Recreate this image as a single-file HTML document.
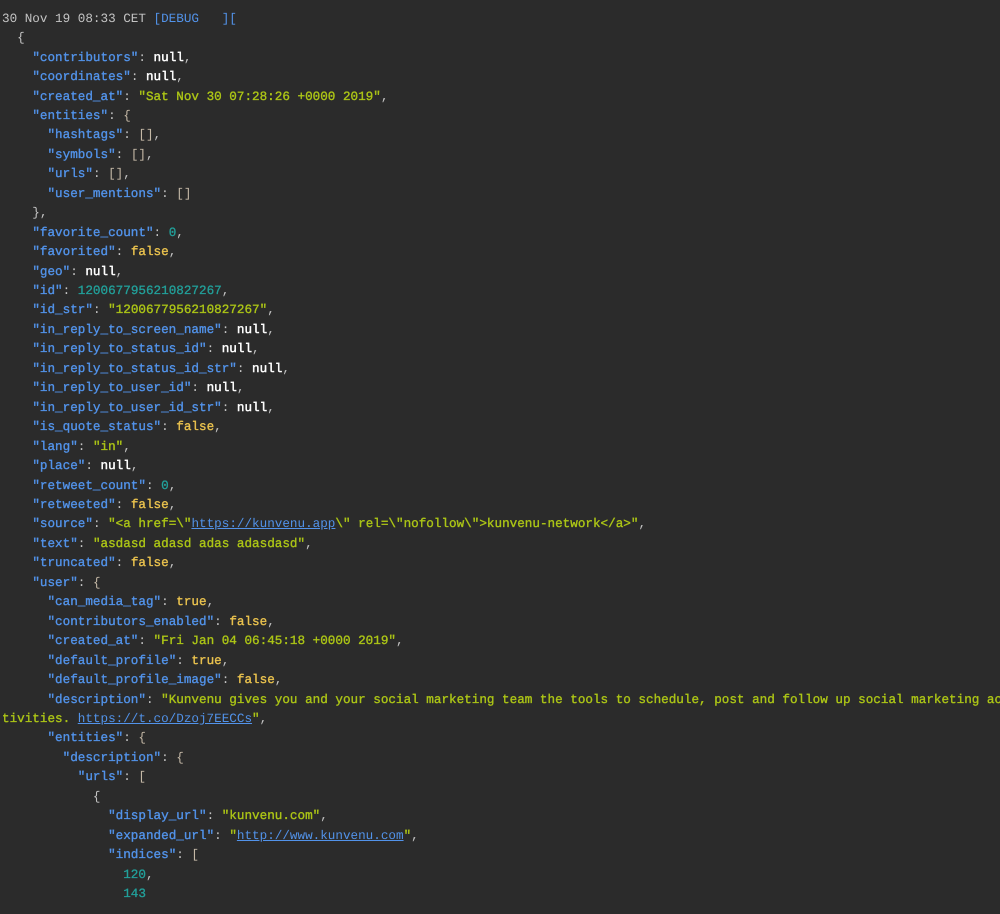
<!DOCTYPE html>
<html>
<head>
<meta charset="utf-8">
<style>
html,body{margin:0;padding:0;background:#2b2b2b;width:1000px;height:914px;overflow:hidden}
pre{margin:0;padding:8.7px 0 0 2px;font-family:"Liberation Mono",monospace;font-size:12.63px;line-height:19.46px;color:#c4c4c4;white-space:pre;font-weight:400;text-rendering:geometricPrecision;filter:blur(.25px)}
.k{color:#5293ea;-webkit-text-stroke:.35px #5293ea}
.s{color:#acc516;-webkit-text-stroke:.35px #acc516}
.n{color:#fff;-webkit-text-stroke:.45px #fff}
.b{color:#eac24e;-webkit-text-stroke:.35px #eac24e}
.d{color:#22a09a;-webkit-text-stroke:.3px #22a09a}
.t{color:#5293ea}
a{color:#5293ea;text-decoration:underline}
.p{color:#c4b8a6}
</style>
</head>
<body>
<pre>30 Nov 19 08:33 CET <span class="t">[DEBUG   ]</span><span class="t">[</span>
  {
    <span class="k">"contributors"</span>: <span class="n">null</span>,
    <span class="k">"coordinates"</span>: <span class="n">null</span>,
    <span class="k">"created_at"</span>: <span class="s">"Sat Nov 30 07:28:26 +0000 2019"</span>,
    <span class="k">"entities"</span>: <span class="p">{</span>
      <span class="k">"hashtags"</span>: <span class="p">[]</span>,
      <span class="k">"symbols"</span>: <span class="p">[]</span>,
      <span class="k">"urls"</span>: <span class="p">[]</span>,
      <span class="k">"user_mentions"</span>: <span class="p">[]</span>
    },
    <span class="k">"favorite_count"</span>: <span class="d">0</span>,
    <span class="k">"favorited"</span>: <span class="b">false</span>,
    <span class="k">"geo"</span>: <span class="n">null</span>,
    <span class="k">"id"</span>: <span class="d">1200677956210827267</span>,
    <span class="k">"id_str"</span>: <span class="s">"1200677956210827267"</span>,
    <span class="k">"in_reply_to_screen_name"</span>: <span class="n">null</span>,
    <span class="k">"in_reply_to_status_id"</span>: <span class="n">null</span>,
    <span class="k">"in_reply_to_status_id_str"</span>: <span class="n">null</span>,
    <span class="k">"in_reply_to_user_id"</span>: <span class="n">null</span>,
    <span class="k">"in_reply_to_user_id_str"</span>: <span class="n">null</span>,
    <span class="k">"is_quote_status"</span>: <span class="b">false</span>,
    <span class="k">"lang"</span>: <span class="s">"in"</span>,
    <span class="k">"place"</span>: <span class="n">null</span>,
    <span class="k">"retweet_count"</span>: <span class="d">0</span>,
    <span class="k">"retweeted"</span>: <span class="b">false</span>,
    <span class="k">"source"</span>: <span class="s">"&lt;a href=\"</span><a>https://kunvenu.app</a><span class="s">\" rel=\"nofollow\"&gt;kunvenu-network&lt;/a&gt;"</span>,
    <span class="k">"text"</span>: <span class="s">"asdasd adasd adas adasdasd"</span>,
    <span class="k">"truncated"</span>: <span class="b">false</span>,
    <span class="k">"user"</span>: <span class="p">{</span>
      <span class="k">"can_media_tag"</span>: <span class="b">true</span>,
      <span class="k">"contributors_enabled"</span>: <span class="b">false</span>,
      <span class="k">"created_at"</span>: <span class="s">"Fri Jan 04 06:45:18 +0000 2019"</span>,
      <span class="k">"default_profile"</span>: <span class="b">true</span>,
      <span class="k">"default_profile_image"</span>: <span class="b">false</span>,
      <span class="k">"description"</span>: <span class="s">"Kunvenu gives you and your social marketing team the tools to schedule, post and follow up social marketing ac</span>
<span class="s">tivities. </span><a>https://t.co/Dzoj7EECCs</a><span class="s">"</span>,
      <span class="k">"entities"</span>: <span class="p">{</span>
        <span class="k">"description"</span>: <span class="p">{</span>
          <span class="k">"urls"</span>: <span class="p">[</span>
            {
              <span class="k">"display_url"</span>: <span class="s">"kunvenu.com"</span>,
              <span class="k">"expanded_url"</span>: <span class="s">"</span><a>http://www.kunvenu.com</a><span class="s">"</span>,
              <span class="k">"indices"</span>: <span class="p">[</span>
                <span class="d">120</span>,
                <span class="d">143</span></pre>
</body>
</html>
